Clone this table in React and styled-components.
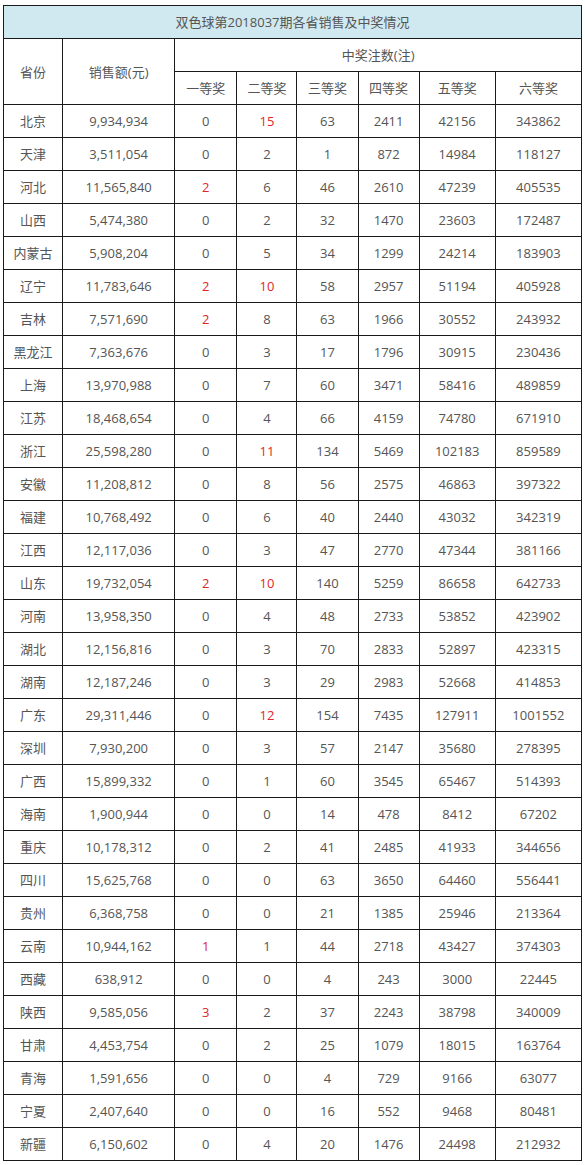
import styled, { createGlobalStyle } from "styled-components";

const GlobalStyle = createGlobalStyle`
  html, body {
    margin: 0;
    padding: 0;
    background: #fff;
  }
  body {
    font-family: "Open Sans", "Noto Sans CJK SC", sans-serif;
  }
`;

// 省份, 销售额, 一等奖 ... 六等奖
const rows = [
  ["北京", "9,934,934", 0, 15, 63, 2411, 42156, 343862],
  ["天津", "3,511,054", 0, 2, 1, 872, 14984, 118127],
  ["河北", "11,565,840", 2, 6, 46, 2610, 47239, 405535],
  ["山西", "5,474,380", 0, 2, 32, 1470, 23603, 172487],
  ["内蒙古", "5,908,204", 0, 5, 34, 1299, 24214, 183903],
  ["辽宁", "11,783,646", 2, 10, 58, 2957, 51194, 405928],
  ["吉林", "7,571,690", 2, 8, 63, 1966, 30552, 243932],
  ["黑龙江", "7,363,676", 0, 3, 17, 1796, 30915, 230436],
  ["上海", "13,970,988", 0, 7, 60, 3471, 58416, 489859],
  ["江苏", "18,468,654", 0, 4, 66, 4159, 74780, 671910],
  ["浙江", "25,598,280", 0, 11, 134, 5469, 102183, 859589],
  ["安徽", "11,208,812", 0, 8, 56, 2575, 46863, 397322],
  ["福建", "10,768,492", 0, 6, 40, 2440, 43032, 342319],
  ["江西", "12,117,036", 0, 3, 47, 2770, 47344, 381166],
  ["山东", "19,732,054", 2, 10, 140, 5259, 86658, 642733],
  ["河南", "13,958,350", 0, 4, 48, 2733, 53852, 423902],
  ["湖北", "12,156,816", 0, 3, 70, 2833, 52897, 423315],
  ["湖南", "12,187,246", 0, 3, 29, 2983, 52668, 414853],
  ["广东", "29,311,446", 0, 12, 154, 7435, 127911, 1001552],
  ["深圳", "7,930,200", 0, 3, 57, 2147, 35680, 278395],
  ["广西", "15,899,332", 0, 1, 60, 3545, 65467, 514393],
  ["海南", "1,900,944", 0, 0, 14, 478, 8412, 67202],
  ["重庆", "10,178,312", 0, 2, 41, 2485, 41933, 344656],
  ["四川", "15,625,768", 0, 0, 63, 3650, 64460, 556441],
  ["贵州", "6,368,758", 0, 0, 21, 1385, 25946, 213364],
  ["云南", "10,944,162", 1, 1, 44, 2718, 43427, 374303],
  ["西藏", "638,912", 0, 0, 4, 243, 3000, 22445],
  ["陕西", "9,585,056", 3, 2, 37, 2243, 38798, 340009],
  ["甘肃", "4,453,754", 0, 2, 25, 1079, 18015, 163764],
  ["青海", "1,591,656", 0, 0, 4, 729, 9166, 63077],
  ["宁夏", "2,407,640", 0, 0, 16, 552, 9468, 80481],
  ["新疆", "6,150,602", 0, 4, 20, 1476, 24498, 212932],
];

const prizes = ["一等奖", "二等奖", "三等奖", "四等奖", "五等奖", "六等奖"];
const widths = [59, 112, 62, 60, 61, 61, 76, 86];

const Page = styled.div`
  padding: 5px 3px;
`;

const Table = styled.table`
  width: 579px;
  border-collapse: collapse;
  table-layout: fixed;
  color: #555;
  font-size: 13px;
`;

const Cell = styled.td`
  height: 32px;
  padding: 0;
  border: 1px solid #1a1a1a;
  text-align: center;
  vertical-align: middle;
  line-height: 32px;
  white-space: nowrap;
  color: ${(p) => (p.$hot ? "#e2252b" : "#555")};
`;

const Title = styled(Cell)`
  background: #d0e9f0;
`;

function isHot(col, value) {
  if (col === 0) return value > 0;
  if (col === 1) return value >= 10;
  return false;
}

export default function App() {
  return (
    <Page>
      <GlobalStyle />
      <Table>
        <colgroup>
          {widths.map((w, i) => (
            <col key={i} style={{ width: w }} />
          ))}
        </colgroup>
        <tbody>
          <tr>
            <Title colSpan={8}>双色球第2018037期各省销售及中奖情况</Title>
          </tr>
          <tr>
            <Cell rowSpan={2}>省份</Cell>
            <Cell rowSpan={2}>销售额(元)</Cell>
            <Cell colSpan={6}>中奖注数(注)</Cell>
          </tr>
          <tr>
            {prizes.map((p) => (
              <Cell key={p}>{p}</Cell>
            ))}
          </tr>
          {rows.map(([name, sales, ...counts]) => (
            <tr key={name}>
              <Cell>{name}</Cell>
              <Cell>{sales}</Cell>
              {counts.map((c, i) => (
                <Cell key={i} $hot={isHot(i, c)}>
                  {c}
                </Cell>
              ))}
            </tr>
          ))}
        </tbody>
      </Table>
    </Page>
  );
}
